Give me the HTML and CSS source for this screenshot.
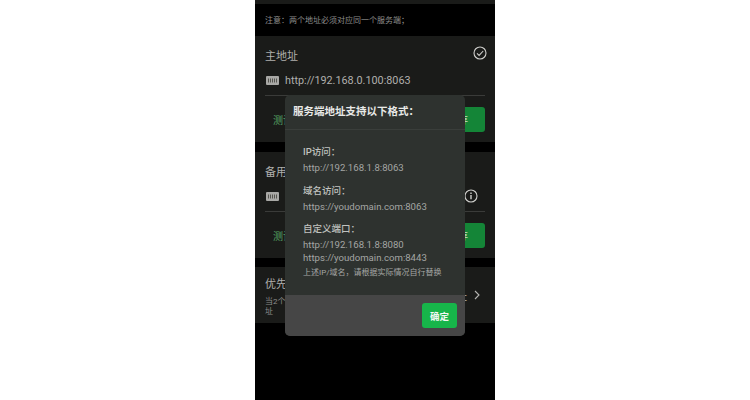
FILE: index.html
```html
<!DOCTYPE html>
<html lang="zh-CN">
<head>
    <meta charset="UTF-8">
    <title>服务端地址</title>
    <link rel="stylesheet" href="styles.css">
</head>
<body>
    <div class="phone">
        <div class="top-strip"></div>
        <div class="note">注意：两个地址必须对应同一个服务端；</div>

        <div class="card">
            <div class="card-head">
                <span class="card-title">主地址</span>
                <svg class="status-icon" viewBox="0 0 14 14"><circle cx="7" cy="7" r="6" fill="none" stroke="#cfcfcc" stroke-width="1.1"/><path d="M4 7.3l2.1 2.1L10.2 5" fill="none" stroke="#cfcfcc" stroke-width="1.1"/></svg>
            </div>
            <div class="address-row">
                <svg class="ip-icon" viewBox="0 0 13 9"><rect width="13" height="9" rx="1" fill="#a8a8a5"/><path d="M2.5 2.5v4M4.5 2.5v4M6.5 2.5v4M8.5 2.5v4M10.5 2.5v4" stroke="#55554f" stroke-width="1"/></svg>
                <span class="address">http://192.168.0.100:8063</span>
            </div>
            <div class="actions">
                <span class="test-link">测试连接</span>
                <button class="save-btn">保存</button>
            </div>
        </div>

        <div class="card">
            <div class="card-head">
                <span class="card-title">备用地址</span>
            </div>
            <div class="address-row">
                <svg class="ip-icon" viewBox="0 0 13 9"><rect width="13" height="9" rx="1" fill="#a8a8a5"/><path d="M2.5 2.5v4M4.5 2.5v4M6.5 2.5v4M8.5 2.5v4M10.5 2.5v4" stroke="#55554f" stroke-width="1"/></svg>
                <span class="address"></span>
                <svg class="info-icon" viewBox="0 0 14 14"><circle cx="7" cy="7" r="6" fill="none" stroke="#cfcfcc" stroke-width="1.1"/><path d="M7 6v4.2M7 3.6v1.3" fill="none" stroke="#cfcfcc" stroke-width="1.4"/></svg>
            </div>
            <div class="actions">
                <span class="test-link">测试连接</span>
                <button class="save-btn">保存</button>
            </div>
        </div>

        <div class="card priority">
            <div class="priority-text">
                <div class="card-title">优先使用</div>
                <div class="priority-desc">当2个地址都可连接时，将优先使用此处所选择的地址</div>
            </div>
            <span class="priority-value">主地址</span>
            <svg class="chevron" viewBox="0 0 6 10"><path d="M1 1l4 4-4 4" fill="none" stroke="#b5b5b2" stroke-width="1.1"/></svg>
        </div>

        <div class="dialog">
            <div class="dialog-title">服务端地址支持以下格式：</div>
            <div class="dialog-body">
                <div class="format-label">IP访问：</div>
                <div class="format-value">http://192.168.1.8:8063</div>
                <div class="format-label">域名访问：</div>
                <div class="format-value">https://youdomain.com:8063</div>
                <div class="format-label">自定义端口：</div>
                <div class="format-value tight">http://192.168.1.8:8080</div>
                <div class="format-value tight">https://youdomain.com:8443</div>
                <div class="format-hint">上述IP/域名，请根据实际情况自行替换</div>
            </div>
            <div class="dialog-footer">
                <button class="ok-btn">确定</button>
            </div>
        </div>
    </div>
</body>
</html>
```

FILE: styles.css
```css
* {
    margin: 0;
    padding: 0;
    box-sizing: border-box;
}

body {
    width: 750px;
    height: 400px;
    display: flex;
    justify-content: center;
    background: #fff;
    font-family: "Roboto", "Noto Sans CJK SC", sans-serif;
    overflow: hidden;
}

.phone {
    width: 240px;
    height: 400px;
    background: #000;
    position: relative;
    overflow: hidden;
}

.top-strip {
    height: 4px;
    background: #1a1b19;
}

.note {
    height: 32px;
    padding: 0 10px;
    line-height: 33px;
    font-size: 8px;
    color: #8e8e8c;
}

.card {
    height: 106px;
    margin-bottom: 10px;
    padding: 0 10px;
    background: #1a1b19;
}

.card-head {
    height: 35px;
    padding-top: 3px;
    display: flex;
    align-items: center;
    justify-content: space-between;
}

.card-title {
    font-size: 11px;
    color: #b0b0ad;
}

.status-icon {
    width: 14px;
    height: 14px;
    margin-right: -2px;
    margin-top: -4px;
}

.address-row {
    height: 25px;
    padding-bottom: 6px;
    display: flex;
    align-items: center;
    border-bottom: 1px solid #3a3b39;
}

.ip-icon {
    width: 13px;
    height: 9px;
    margin-left: 1px;
    margin-right: 6px;
    flex-shrink: 0;
}

.address {
    font-size: 10.8px;
    color: #b0b0ad;
    flex: 1;
}

.info-icon {
    width: 14px;
    height: 14px;
    margin-right: 7px;
}

.actions {
    height: 46px;
    padding-left: 8px;
    padding-top: 1px;
    display: flex;
    align-items: center;
    justify-content: space-between;
}

.test-link {
    font-size: 10px;
    color: #58a566;
    margin-top: -1px;
}

.save-btn {
    width: 54px;
    height: 25px;
    border: none;
    border-radius: 3px;
    background: #148537;
    color: #c4dfca;
    font-family: inherit;
    font-size: 10px;
}

.priority {
    height: 56px;
    margin-top: -1px;
    display: flex;
    align-items: center;
}

.priority-text {
    flex: 1;
    min-width: 0;
    padding-top: 1px;
}

.priority-desc {
    margin-top: 6px;
    width: 185px;
    font-size: 8px;
    line-height: 10px;
    color: #8e8e8c;
}

.priority-value {
    margin-right: 7px;
    font-size: 10px;
    color: #b0b0ad;
    white-space: nowrap;
}

.chevron {
    width: 6px;
    height: 10px;
    margin-right: 5px;
    flex-shrink: 0;
}

.dialog {
    position: absolute;
    left: 30px;
    top: 95px;
    width: 180px;
    height: 240.5px;
    border-radius: 5px;
    overflow: hidden;
    background: #2e322f;
    display: flex;
    flex-direction: column;
}

.dialog-title {
    height: 35px;
    padding: 0 8px;
    line-height: 34px;
    font-size: 10.5px;
    font-weight: 700;
    color: #e8e9e7;
    border-bottom: 1px solid #3a3e3b;
}

.dialog-body {
    flex: 1;
    padding: 14px 18px 0;
}

.format-label {
    height: 16px;
    line-height: 16px;
    font-size: 9.5px;
    font-weight: 500;
    color: #c0c2bf;
}

.format-value {
    height: 16px;
    line-height: 16px;
    font-size: 9.6px;
    color: #a4a6a4;
}

.format-value + .format-label {
    margin-top: 6.5px;
}

.format-value.tight {
    height: 12.5px;
    line-height: 12.5px;
}

.format-label + .format-value.tight {
    margin-top: 2px;
}

.format-hint {
    margin-top: 2px;
    font-size: 8px;
    line-height: 14px;
    color: #a4a6a4;
    white-space: nowrap;
}

.dialog-footer {
    height: 40.5px;
    padding: 8px;
    display: flex;
    justify-content: flex-end;
    background: #464646;
}

.ok-btn {
    width: 35px;
    height: 25px;
    border: none;
    border-radius: 3px;
    background: #17b54a;
    color: #f2f7f3;
    font-family: inherit;
    font-size: 9.5px;
    font-weight: 700;
}
```
